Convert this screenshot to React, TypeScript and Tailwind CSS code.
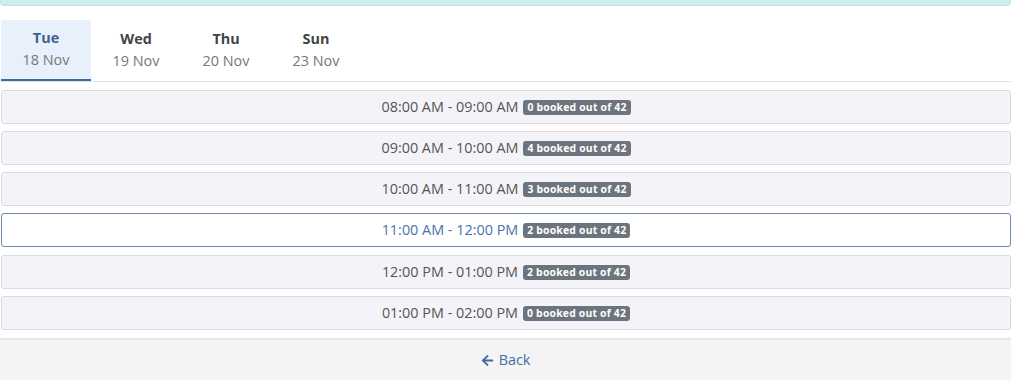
import { FaArrowLeft } from "react-icons/fa";

const days = [
  { day: "Tue", date: "18 Nov", active: true },
  { day: "Wed", date: "19 Nov" },
  { day: "Thu", date: "20 Nov" },
  { day: "Sun", date: "23 Nov" },
];

const slots = [
  { time: "08:00 AM - 09:00 AM", booked: 0 },
  { time: "09:00 AM - 10:00 AM", booked: 4 },
  { time: "10:00 AM - 11:00 AM", booked: 3 },
  { time: "11:00 AM - 12:00 PM", booked: 2, active: true },
  { time: "12:00 PM - 01:00 PM", booked: 2 },
  { time: "01:00 PM - 02:00 PM", booked: 0 },
];

export default function App() {
  return (
    <div className="w-[1024px] h-[392px] bg-white font-['Open_Sans',sans-serif] text-[14.4px] overflow-hidden">
      <div className="w-[1011px]">
        <div className="h-[6px] bg-[#d1ecf1] border border-t-0 border-[#bee5eb] rounded-b-[4px]" />

        <div className="flex mt-[14px] border-b border-[#e3e3e3]">
          {days.map((d) => (
            <div
              key={d.day}
              className={`w-[90px] h-[61px] flex flex-col items-center justify-center leading-[22px] pb-px ${
                d.active
                  ? "bg-[#e8f0fb] border-b-2 border-[#3e6aa5] rounded-t-[3px] ml-px"
                  : ""
              }`}
            >
              <span
                className={`font-bold ${d.active ? "text-[#3e5f92]" : "text-[#444]"}`}
              >
                {d.day}
              </span>
              <span className="text-[#777]">{d.date}</span>
            </div>
          ))}
        </div>

        <div className="mt-[8px] flex flex-col">
          {slots.map((s, i) => (
            <div
              key={s.time}
              className={`h-[34px] ml-px rounded-[3px] border flex items-center justify-center gap-[5px] ${
                i === 4 ? "mt-[8px]" : i > 0 ? "mt-[7px]" : ""
              } ${
                s.active
                  ? "bg-white border-[#7089ae] text-[#4a74ab]"
                  : "bg-[#f4f4f8] border-[#d9d9e0] text-[#555]"
              }`}
            >
              <span>{s.time}</span>
              <span className="bg-[#6c757d] text-white font-bold text-[10.4px] leading-[15px] px-[4px] rounded-[3px] tracking-[0.2px]">
                {s.booked} booked out of 42
              </span>
            </div>
          ))}
        </div>

        <div className="mt-[8px] h-[42px] bg-[#f4f4f4] border-t-2 border-[#e6e6e6] flex items-center justify-center gap-[5px] text-[#3f6ea8]">
          <FaArrowLeft className="w-[13px] h-[13px]" />
          <span>Back</span>
        </div>
      </div>
    </div>
  );
}
